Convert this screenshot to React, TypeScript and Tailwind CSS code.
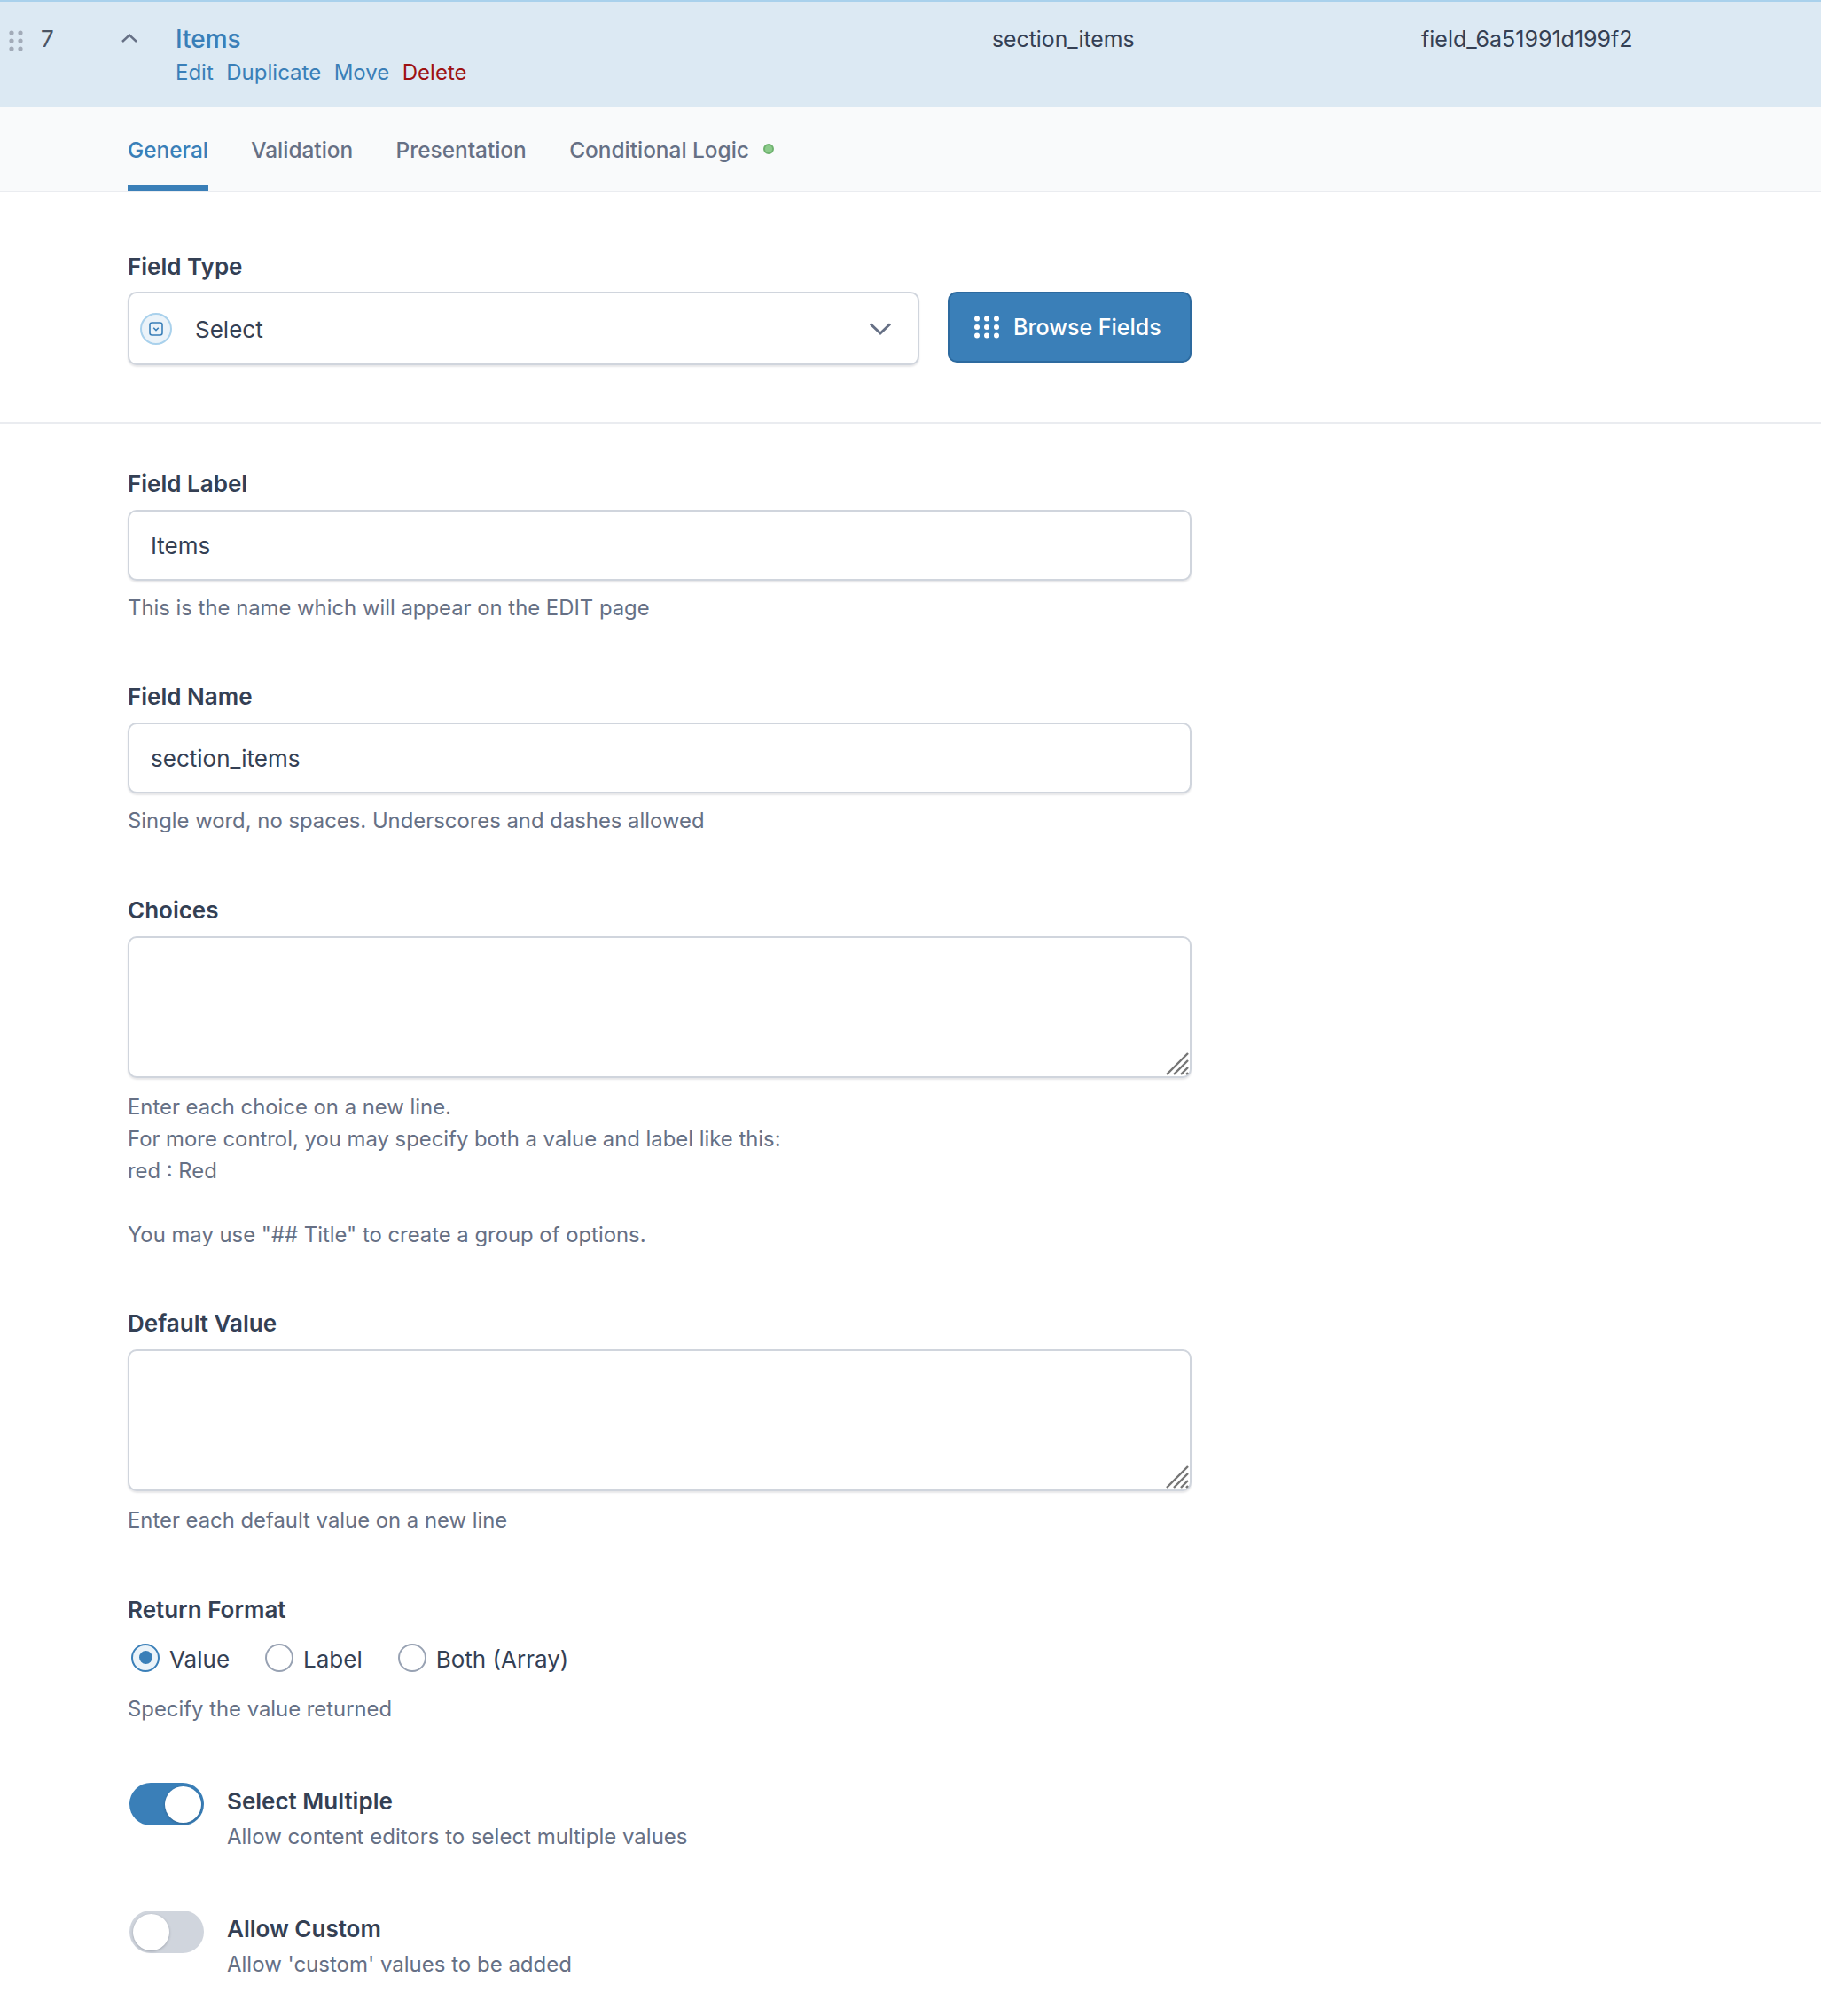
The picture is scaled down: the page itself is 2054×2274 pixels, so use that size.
import type { ReactNode } from "react";

function Grip({ className }: { className: string }) {
  return (
    <svg className={className} width="16" height="24" viewBox="0 0 16 24" fill="currentColor">
      <circle cx="3" cy="3" r="2.6" />
      <circle cx="13" cy="3" r="2.6" />
      <circle cx="3" cy="12" r="2.6" />
      <circle cx="13" cy="12" r="2.6" />
      <circle cx="3" cy="21" r="2.6" />
      <circle cx="13" cy="21" r="2.6" />
    </svg>
  );
}

function ResizeHandle() {
  return (
    <svg className="absolute right-[3px] bottom-[3px]" width="26" height="26" viewBox="0 0 26 26" stroke="#757575" strokeWidth="2.4" fill="none">
      <path d="M1 25 25 1" />
      <path d="M9 25 25 9" />
      <path d="M17 25 25 17" />
      <path d="M23 25 25 23" />
    </svg>
  );
}

function Label({ children, className = "" }: { children: ReactNode; className?: string }) {
  return <div className={`h-[36px] leading-[36px] text-[26px] text-[#344054] font-semibold ${className}`}>{children}</div>;
}

function Hint({ children }: { children: ReactNode }) {
  return <div className="leading-[36px] text-[#667085]">{children}</div>;
}

function TextField({ label, value, hint, className }: { label: string; value: string; hint: string; className: string }) {
  return (
    <div className={className}>
      <Label>{label}</Label>
      <input
        readOnly
        value={value}
        className="block mt-[11px] w-[1200px] h-[80px] px-[24px] rounded-[10px] border-2 border-[#d0d5dd] bg-white text-[26px] text-[#344054] shadow-[0_2px_2px_rgba(16,24,40,0.1)] outline-none"
      />
      <div className="mt-[13px]">
        <Hint>{hint}</Hint>
      </div>
    </div>
  );
}

function TextArea({ label, children, className, hintClass }: { label: string; children: ReactNode; className: string; hintClass: string }) {
  return (
    <div className={className}>
      <Label>{label}</Label>
      <div className="relative mt-[11px] w-[1200px] h-[160px]">
        <textarea readOnly className="block w-full h-full rounded-[10px] border-2 border-[#d0d5dd] bg-white shadow-[0_2px_2px_rgba(16,24,40,0.1)] resize-none outline-none" />
        <ResizeHandle />
      </div>
      <div className={hintClass}>{children}</div>
    </div>
  );
}

function Radio({ label, checked = false }: { label: string; checked?: boolean }) {
  return (
    <div className="flex items-center gap-[11px]">
      <span
        className={
          checked
            ? "flex items-center justify-center w-[32px] h-[32px] mt-[-3px] rounded-full border-2 border-[#3a7fb8] bg-[#ebf3f9]"
            : "w-[32px] h-[32px] mt-[-3px] rounded-full border-2 border-[#98a2b3] bg-white"
        }
      >
        {checked ? <span className="w-[15px] h-[15px] rounded-full bg-[#3a7fb8]" /> : null}
      </span>
      <span className="text-[26px] text-[#344054]">{label}</span>
    </div>
  );
}

function Toggle({ on, title, desc, className }: { on: boolean; title: string; desc: string; className: string }) {
  return (
    <div className={`flex pl-[2px] ${className}`}>
      <div
        className={
          on
            ? "flex justify-end items-center w-[84px] h-[48px] px-[3px] rounded-full bg-[#3a7fb8]"
            : "flex justify-start items-center w-[84px] h-[48px] px-[4px] rounded-full bg-[#d0d5dd]"
        }
      >
        <span className="w-[41px] h-[41px] rounded-full bg-white shadow-[0_1px_3px_rgba(16,24,40,0.25)]" />
      </div>
      <div className="ml-[26px]">
        <div className="h-[43px] leading-[41px] text-[26px] font-semibold text-[#344054]">{title}</div>
        <div className="leading-[36px] text-[24px] text-[#667085]">{desc}</div>
      </div>
    </div>
  );
}

export default function App() {
  return (
    <div className="w-[2054px] h-[2274px] overflow-hidden bg-white font-['Inter',sans-serif] text-[23.85px]">
      {/* field row header */}
      <div className="flex h-[121px] border-t-2 border-[#a9d1ec] bg-[#dce9f3]">
        <Grip className="mt-[32px] ml-[10px] text-[#a2abb8]" />
        <div className="mt-[24px] ml-[20px] w-[91px] h-[36px] leading-[36px] text-[26px] text-[#4b5563]">7</div>
        <svg className="mt-[36px] w-[18px] h-[10px] text-[#667085]" viewBox="0 0 18 10" fill="none" stroke="currentColor" strokeWidth="2.4">
          <path d="M1 9 9 1.5 17 9" />
        </svg>
        <div className="ml-[43px] w-[921px] mt-[22px]">
          <div className="h-[40px] leading-[40px] text-[28px] font-medium text-[#3a7fb8]">Items</div>
          <div className="flex gap-[14.5px] h-[36px] leading-[36px] text-[24px] text-[#3a7fb8]">
            <span>Edit</span>
            <span>Duplicate</span>
            <span>Move</span>
            <span className="text-[#9e1212]">Delete</span>
          </div>
        </div>
        <div className="w-[484px] mt-[24px] h-[36px] leading-[36px] text-[24.8px] text-[#344054]">section_items</div>
        <div className="mt-[24px] h-[36px] leading-[36px] text-[25px] text-[#344054]">field_6a51991d199f2</div>
      </div>

      {/* tabs */}
      <div className="flex gap-[48.4px] h-[96px] pl-[144px] border-b-2 border-[#eaecf0] bg-[#f9fafb] text-[24.4px] text-[#667085]">
        <div className="pt-[30px] border-b-[6px] border-[#3a7fb8] text-[#3a7fb8] font-medium">General</div>
        <div className="pt-[30px] font-medium">Validation</div>
        <div className="pt-[30px] font-medium">Presentation</div>
        <div className="flex pt-[30px] font-medium h-[65px]">
          Conditional Logic
          <span className="w-[12px] h-[12px] mt-[11px] ml-[16px] rounded-full bg-[#8ccb8b] border-2 border-[#6fb26f]" />
        </div>
      </div>

      {/* field type */}
      <div className="pl-[144px] pt-[66px] h-[261px] border-b-2 border-[#eaecf0]">
        <Label>Field Type</Label>
        <div className="flex gap-[32px] mt-[10px] items-start">
          <div className="flex items-center w-[893px] h-[83px] pl-[12px] pr-[16px] rounded-[10px] border-2 border-[#d0d5dd] bg-white shadow-[0_2px_2px_rgba(16,24,40,0.1)]">
            <span className="flex items-center justify-center w-[36px] h-[36px] rounded-full border-2 border-[#a9d1ec] bg-[#ebf3f9]">
              <svg width="16" height="16" viewBox="0 0 16 16" fill="none" stroke="#3a7fb8" strokeWidth="1.6">
                <rect x="1" y="1" width="14" height="14" rx="2.5" />
                <path d="M5.2 6.8 8 9.6l2.8-2.8" />
              </svg>
            </span>
            <span className="ml-[26px] pt-[1px] flex-1 text-[26px] text-[#344054]">Select</span>
            <svg className="mr-[13px]" width="26" height="16" viewBox="0 0 26 16" fill="none" stroke="#667085" strokeWidth="3">
              <path d="M2 2.5 13 13 24 2.5" />
            </svg>
          </div>
          <div className="flex items-center w-[275px] h-[80px] pl-[27px] rounded-[10px] border-2 border-[#2d6a9f] bg-[#3a7fb8] text-[25px] text-white font-medium">
            <svg width="30" height="26" viewBox="0 0 30 26" fill="white">
              <circle cx="4" cy="3.5" r="3" />
              <circle cx="15" cy="3.5" r="3" />
              <circle cx="26" cy="3.5" r="3" />
              <circle cx="4" cy="13" r="3" />
              <circle cx="15" cy="13" r="3" />
              <circle cx="26" cy="13" r="3" />
              <circle cx="4" cy="22.5" r="3" />
              <circle cx="15" cy="22.5" r="3" />
              <circle cx="26" cy="22.5" r="3" />
            </svg>
            <span className="ml-[15px] pt-[2px]">Browse Fields</span>
          </div>
        </div>
      </div>

      <div className="pl-[144px]">
        <TextField className="pt-[50px]" label="Field Label" value="Items" hint="This is the name which will appear on the EDIT page" />
        <TextField className="pt-[64px]" label="Field Name" value="section_items" hint="Single word, no spaces. Underscores and dashes allowed" />
        <TextArea className="pt-[65px]" hintClass="mt-[15px]" label="Choices">
          <Hint>Enter each choice on a new line.</Hint>
          <Hint>For more control, you may specify both a value and label like this:</Hint>
          <Hint>red : Red</Hint>
          <div className="h-[36px]" />
          <Hint>You may use "## Title" to create a group of options.</Hint>
        </TextArea>
        <TextArea className="pt-[64px]" hintClass="mt-[15px]" label="Default Value">
          <Hint>Enter each default value on a new line</Hint>
        </TextArea>

        <Label className="mt-[65px]">Return Format</Label>
        <div className="flex gap-[40px] mt-[19px] h-[36px] items-center pl-[4px]">
          <Radio label="Value" checked />
          <Radio label="Label" />
          <Radio label="Both (Array)" />
        </div>
        <div className="mt-[21px]">
          <Hint>Specify the value returned</Hint>
        </div>

        <Toggle className="mt-[65px]" on title="Select Multiple" desc="Allow content editors to select multiple values" />
        <Toggle className="mt-[65px]" on={false} title="Allow Custom" desc="Allow 'custom' values to be added" />
      </div>
    </div>
  );
}
